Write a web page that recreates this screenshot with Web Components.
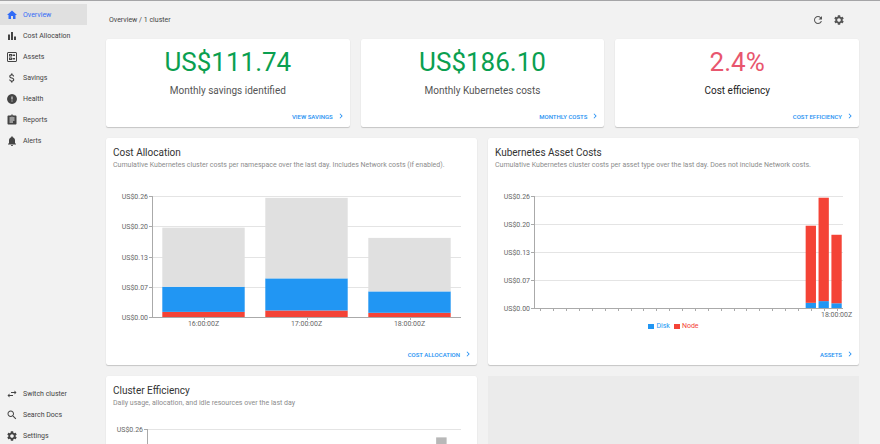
<!DOCTYPE html>
<html lang="en">
<head>
<meta charset="utf-8">
<title>Overview</title>
<style>
  html, body {
    margin: 0;
    height: 100%;
  }
  body {
    overflow: hidden;
    font-family: Roboto, "Liberation Sans", sans-serif;
    font-size: 7px;
    color: #444;
    background: #f2f2f2;
  }
</style>
</head>
<body>
<cost-app></cost-app>

<script>
// 24x24 icon paths
const ICONS = {
  home: "M10 20v-6h4v6h5v-8h3L12 3 2 12h3v8z",
  bars: "M4 9h4v11H4zm12 4h4v7h-4zm-6-9h4v16h-4z",
  assets: "M13 7h5v3h-5zm0 7h5v3h-5zM19 2H5c-1.600 0-3 1.400-3 3v14c0 1.600 1.400 3 3 3h14c1.600 0 3-1.400 3-3V5c0-1.600-1.400-3-3-3zm1 18H4V4h16v16zM12 6H6v5h6V6zm-2 3H8V8h2v1zm2 4H6v5h6v-5zm-2 3H8v-1h2v1z",
  dollar: "M11.800 10.900c-2.270-.59-3-1.200-3-2.150 0-1.090 1.010-1.850 2.700-1.850 1.780 0 2.440.85 2.500 2.100h2.210c-.07-1.720-1.120-3.300-3.210-3.810V3h-3v2.160c-1.940.42-3.500 1.680-3.500 3.610 0 2.310 1.910 3.460 4.700 4.130 2.500.6 3 1.480 3 2.410 0 .69-.49 1.790-2.700 1.790-2.060 0-2.870-.92-2.980-2.100h-2.200c.12 2.190 1.760 3.420 3.680 3.830V21h3v-2.150c1.950-.37 3.500-1.500 3.500-3.550 0-2.840-2.430-3.810-4.700-4.400z",
  health: "M12 2 8 3 5 5 3 8 2 12 3 16 5 19 8 21 12 22 16 21 19 19 21 16 22 12 21 8 19 5 16 3zM13 17h-2v-2h2zM13 13h-2V7h2z",
  report: "M19 3h-4.180C14.400 1.840 13.300 1 12 1s-2.400.84-2.820 2H5c-1.100 0-2 .9-2 2v14c0 1.100.9 2 2 2h14c1.100 0 2-.9 2-2V5c0-1.100-.9-2-2-2zm-7 0c.55 0 1 .45 1 1s-.45 1-1 1-1-.45-1-1 .45-1 1-1zm2 14H7v-2h7v2zm3-4H7v-2h10v2zm0-4H7V7h10v2z",
  bell: "M12 22c1.100 0 2-.9 2-2h-4c0 1.100.89 2 2 2zm6-6v-5c0-3.070-1.640-5.640-4.500-6.320V4c0-.83-.67-1.500-1.500-1.500s-1.500.67-1.500 1.500v.68C7.630 5.360 6 7.920 6 11v5l-2 2v1h16v-1l-2-2z",
  swap: "M6.990 11 3 15l3.990 4v-3H14v-2H6.990v-3zM21 9l-3.990-4v3H10v2h7.010v3L21 9z",
  search: "M15.500 14h-.79l-.28-.27C15.410 12.590 16 11.110 16 9.500 16 5.910 13.090 3 9.500 3S3 5.910 3 9.500 5.910 16 9.500 16c1.610 0 3.090-.59 4.230-1.570l.27.28v.79l5 4.990L20.490 19l-4.990-5zm-6 0C7.010 14 5 11.990 5 9.500S7.010 5 9.500 5 14 7.010 14 9.500 11.990 14 9.500 14z",
  gear: "M19.140 12.940c.04-.3.06-.61.06-.94s-.02-.64-.07-.94l2.030-1.580c.18-.14.23-.41.12-.61l-1.920-3.320c-.12-.22-.37-.29-.59-.22l-2.390.96c-.5-.38-1.030-.7-1.620-.94l-.36-2.540c-.04-.24-.24-.41-.48-.41h-3.840c-.24 0-.43.17-.47.41l-.36 2.540c-.59.24-1.130.57-1.620.94l-2.390-.96c-.22-.08-.47 0-.59.22L2.740 8.870c-.12.21-.08.47.12.61l2.030 1.580c-.05.3-.09.63-.09.94s.02.64.07.94l-2.030 1.580c-.18.14-.23.41-.12.61l1.920 3.320c.12.22.37.29.59.22l2.390-.96c.5.38 1.030.7 1.620.94l.36 2.540c.05.24.24.41.48.41h3.840c.24 0 .44-.17.47-.41l.36-2.540c.59-.24 1.130-.56 1.620-.94l2.390.96c.22.08.47 0 .59-.22l1.920-3.320c.12-.22.07-.47-.12-.61l-2.010-1.580zM12 15.600c-1.980 0-3.600-1.620-3.600-3.600s1.620-3.600 3.600-3.600 3.600 1.620 3.600 3.600-1.620 3.600-3.600 3.600z",
  refresh: "M17.650 6.350C16.200 4.900 14.210 4 12 4c-4.420 0-7.990 3.580-7.990 8s3.570 8 7.990 8c3.730 0 6.840-2.550 7.730-6h-2.080c-.82 2.330-3.040 4-5.650 4-3.310 0-6-2.690-6-6s2.690-6 6-6c1.660 0 3.140.69 4.220 1.780L13 11h7V4l-2.350 2.350z",
  chevron: "M8.590 16.590 13.170 12 8.590 7.410 10 6l6 6-6 6z"
};

const GRAY = "#e0e0e0";
const BLUE = "#2196f3";
const RED = "#f44336";

const COST_TICKS = ["US$0.26", "US$0.20", "US$0.13", "US$0.07", "US$0.00"];

const CHARTS = {
  allocation: {
    colors: [RED, BLUE, GRAY],
    yTicks: COST_TICKS,
    slots: 3,
    bars: { 0: [0.011, 0.054, 0.127], 1: [0.014, 0.069, 0.173], 2: [0.009, 0.046, 0.115] },
    labels: { 0: "16:00:00Z", 1: "17:00:00Z", 2: "18:00:00Z" }
  },
  assets: {
    colors: [BLUE, RED],
    yTicks: COST_TICKS,
    slots: 24,
    bars: { 21: [0.012, 0.179], 22: [0.016, 0.240], 23: [0.011, 0.159] },
    labels: { 23: "18:00:00Z" }
  },
  efficiency: {
    colors: ["#b8b8b8"],
    yTicks: ["US$0.26"],
    slots: 24,
    bars: { 22: [0.242] },
    labels: {}
  }
};

class CostIcon extends HTMLElement {
  constructor() {
    super();
    this.attachShadow({ mode: "open" });
  }
  connectedCallback() {
    this.shadowRoot.innerHTML = `
<style>
:host {
  display: block;
  flex: none;
  width: var(--icon-size, 12px);
  height: var(--icon-size, 12px);
}
svg {
  display: block;
  width: 100%;
  height: 100%;
  fill: currentColor;
}
</style>
<svg viewBox="0 0 24 24" aria-hidden="true"><path fill-rule="evenodd" d="${ICONS[this.getAttribute("name")]}"/></svg>`;
  }
}
customElements.define("cost-icon", CostIcon);

class NavItem extends HTMLElement {
  constructor() {
    super();
    this.attachShadow({ mode: "open" });
  }
  connectedCallback() {
    this.shadowRoot.innerHTML = `
<style>
:host {
  display: block;
}
a {
  display: flex;
  align-items: center;
  gap: 5px;
  height: 21px;
  padding-left: 6px;
  color: inherit;
  text-decoration: none;
}
:host([active]) a {
  color: #326cf6;
  background: #e0e0e0;
}
</style>
<a href="#"><cost-icon name="${this.getAttribute("icon")}"></cost-icon><slot></slot></a>`;
  }
}
customElements.define("nav-item", NavItem);

class CardLink extends HTMLElement {
  constructor() {
    super();
    this.attachShadow({ mode: "open" }).innerHTML = `
<style>
:host {
  display: block;
  align-self: flex-end;
  margin-top: auto;
  --icon-size: 10px;
}
a {
  display: flex;
  align-items: center;
  gap: 3px;
  color: #2490f2;
  font-size: 6px;
  font-weight: 500;
  text-transform: uppercase;
  text-decoration: none;
}
</style>
<a href="#"><slot></slot><cost-icon name="chevron"></cost-icon></a>`;
  }
}
customElements.define("card-link", CardLink);

const cardStyle = `
:host {
  display: flex;
  flex-direction: column;
  box-sizing: border-box;
  min-width: 0;
  padding: 7px 4px 6px 7px;
  border-radius: 2px;
  background: #fff;
  box-shadow: 0 1px 1px rgba(0, 0, 0, .18), 0 0 1px rgba(0, 0, 0, .08);
}`;

class StatCard extends HTMLElement {
  constructor() {
    super();
    this.attachShadow({ mode: "open" }).innerHTML = `
<style>
${cardStyle}
:host {
  min-height: 88px;
  padding-left: 4px;
}
.value {
  color: #0a9f50;
  font-size: 26px;
  line-height: 32px;
  text-align: center;
}
:host([bad]) .value {
  color: #e8566e;
}
.label {
  margin-top: 6px;
  color: #555;
  font-size: 10px;
  line-height: 14px;
  text-align: center;
}
:host([bad]) .label {
  color: #222;
}
</style>
<div class="value"><slot name="value"></slot></div>
<div class="label"><slot name="label"></slot></div>
<slot></slot>`;
  }
}
customElements.define("stat-card", StatCard);

class ChartCard extends HTMLElement {
  constructor() {
    super();
    this.attachShadow({ mode: "open" }).innerHTML = `
<style>
${cardStyle}
:host {
  min-height: 227px;
  padding-top: 8px;
}
h2 {
  margin: 0;
  color: #333;
  font-size: 10px;
  font-weight: 400;
  line-height: 14px;
}
p {
  margin: 0;
  color: #8c8c8c;
  line-height: 10px;
}
</style>
<h2><slot name="title"></slot></h2>
<p><slot name="subtitle"></slot></p>
<slot></slot>`;
  }
}
customElements.define("chart-card", ChartCard);

// stacked bars; x is in percent so the plot follows the card width
class BarChart extends HTMLElement {
  constructor() {
    super();
    this.attachShadow({ mode: "open" });
  }
  connectedCallback() {
    const chart = CHARTS[this.getAttribute("data")];
    const h = Number(this.getAttribute("height"));
    const max = 0.26;
    const slot = 100 / chart.slots;
    let grid = "";
    let bars = "";
    let ticks = "";
    chart.yTicks.forEach((text, i) => {
      const y = Math.round((h * i) / 4);
      if (i < 4) grid += `<rect class="grid" y="${y}" width="100%" height="1"/>`;
      ticks += `<rect class="axis" x="-3" y="${y}" width="3" height="1"/>`;
      ticks += `<text x="-4" y="${y + 3}" text-anchor="end">${text}</text>`;
    });
    for (let i = 0; i < chart.slots; i++) {
      const mid = (i + 0.5) * slot;
      ticks += `<rect class="axis" x="${mid}%" y="${h}" width="1" height="3"/>`;
      if (chart.labels[i]) {
        ticks += `<text x="${mid}%" y="${h + 9}" text-anchor="middle">${chart.labels[i]}</text>`;
      }
      let bottom = h;
      (chart.bars[i] || []).forEach((value, n) => {
        const top = bottom - (value / max) * h;
        bars += `<rect x="${(i + 0.1) * slot}%" y="${top}" width="${slot * 0.8}%" height="${bottom - top}" fill="${chart.colors[n]}"/>`;
        bottom = top;
      });
    }
    this.shadowRoot.innerHTML = `
<style>
:host {
  display: block;
  margin: 26px 12px 0 39px;
}
:host([compact]) {
  margin: 21px 12px 0 34px;
}
svg {
  display: block;
  width: 100%;
  overflow: visible;
  font-size: 7px;
}
text {
  fill: #666;
}
.grid {
  fill: #e4e4e4;
}
.axis {
  fill: #aaa;
}
.grid, .axis {
  shape-rendering: crispEdges;
}
</style>
<svg height="${h}" role="img">
${grid}${bars}
<rect class="axis" width="1" height="${h}"/>
<rect class="axis" y="${h}" width="100%" height="1"/>
${ticks}
</svg>`;
  }
}
customElements.define("bar-chart", BarChart);

class ChartLegend extends HTMLElement {
  constructor() {
    super();
    this.attachShadow({ mode: "open" }).innerHTML = `
<style>
:host {
  display: flex;
  justify-content: center;
  gap: 4px;
  margin-top: 14px;
  padding-right: 3px;
  line-height: 8px;
}
span {
  display: flex;
  align-items: center;
  gap: 2px;
}
span::before {
  content: "";
  width: 6px;
  height: 5px;
  background: currentColor;
}
.disk {
  color: ${BLUE};
}
.node {
  color: ${RED};
}
</style>
<span class="disk">Disk</span><span class="node">Node</span>`;
  }
}
customElements.define("chart-legend", ChartLegend);

class CostApp extends HTMLElement {
  constructor() {
    super();
    this.attachShadow({ mode: "open" }).innerHTML = `
<style>
:host {
  display: flex;
  box-sizing: border-box;
  height: 100vh;
  border-top: 1px solid #a5a5a7;
}
nav {
  display: flex;
  flex: none;
  flex-direction: column;
  box-sizing: border-box;
  width: 87px;
  height: 100vh;
  margin-top: 3px;
  padding-bottom: 2px;
}
.bottom {
  margin-top: auto;
}
main {
  flex: 1;
  min-width: 0;
  padding: 8px 21px 0 19px;
  overflow-y: auto;
  scrollbar-width: none;
}
header {
  display: flex;
  align-items: center;
  gap: 9px;
  height: 21px;
  padding: 0 14px 0 3px;
  margin-bottom: 9px;
}
header span {
  flex: 1;
}
button {
  padding: 0;
  border: 0;
  color: #555;
  background: none;
}
.row {
  display: grid;
  grid-auto-columns: minmax(0, 1fr);
  grid-auto-flow: column;
  gap: 11px;
  margin-bottom: 11px;
}
.empty {
  background: #ebebeb;
}
</style>
<nav>
  <nav-item icon="home" active>Overview</nav-item>
  <nav-item icon="bars">Cost Allocation</nav-item>
  <nav-item icon="assets">Assets</nav-item>
  <nav-item icon="dollar">Savings</nav-item>
  <nav-item icon="health">Health</nav-item>
  <nav-item icon="report">Reports</nav-item>
  <nav-item icon="bell">Alerts</nav-item>
  <div class="bottom">
    <nav-item icon="swap">Switch cluster</nav-item>
    <nav-item icon="search">Search Docs</nav-item>
    <nav-item icon="gear">Settings</nav-item>
  </div>
</nav>
<main>
  <header>
    <span>Overview / 1 cluster</span>
    <button aria-label="Refresh"><cost-icon name="refresh"></cost-icon></button>
    <button aria-label="Settings"><cost-icon name="gear"></cost-icon></button>
  </header>
  <div class="row">
    <stat-card>
      <span slot="value">US$111.74</span>
      <span slot="label">Monthly savings identified</span>
      <card-link>View savings</card-link>
    </stat-card>
    <stat-card>
      <span slot="value">US$186.10</span>
      <span slot="label">Monthly Kubernetes costs</span>
      <card-link>Monthly costs</card-link>
    </stat-card>
    <stat-card bad>
      <span slot="value">2.4%</span>
      <span slot="label">Cost efficiency</span>
      <card-link>Cost efficiency</card-link>
    </stat-card>
  </div>
  <div class="row">
    <chart-card>
      <span slot="title">Cost Allocation</span>
      <span slot="subtitle">Cumulative Kubernetes cluster costs per namespace over the last day. Includes Network costs (if enabled).</span>
      <bar-chart data="allocation" height="121"></bar-chart>
      <card-link>Cost Allocation</card-link>
    </chart-card>
    <chart-card>
      <span slot="title">Kubernetes Asset Costs</span>
      <span slot="subtitle">Cumulative Kubernetes cluster costs per asset type over the last day. Does not include Network costs.</span>
      <bar-chart data="assets" height="112"></bar-chart>
      <chart-legend></chart-legend>
      <card-link>Assets</card-link>
    </chart-card>
  </div>
  <div class="row">
    <chart-card>
      <span slot="title">Cluster Efficiency</span>
      <span slot="subtitle">Daily usage, allocation, and idle resources over the last day</span>
      <bar-chart data="efficiency" height="121" compact></bar-chart>
    </chart-card>
    <div class="empty"></div>
  </div>
</main>`;
  }
}
customElements.define("cost-app", CostApp);
</script>
</body>
</html>
